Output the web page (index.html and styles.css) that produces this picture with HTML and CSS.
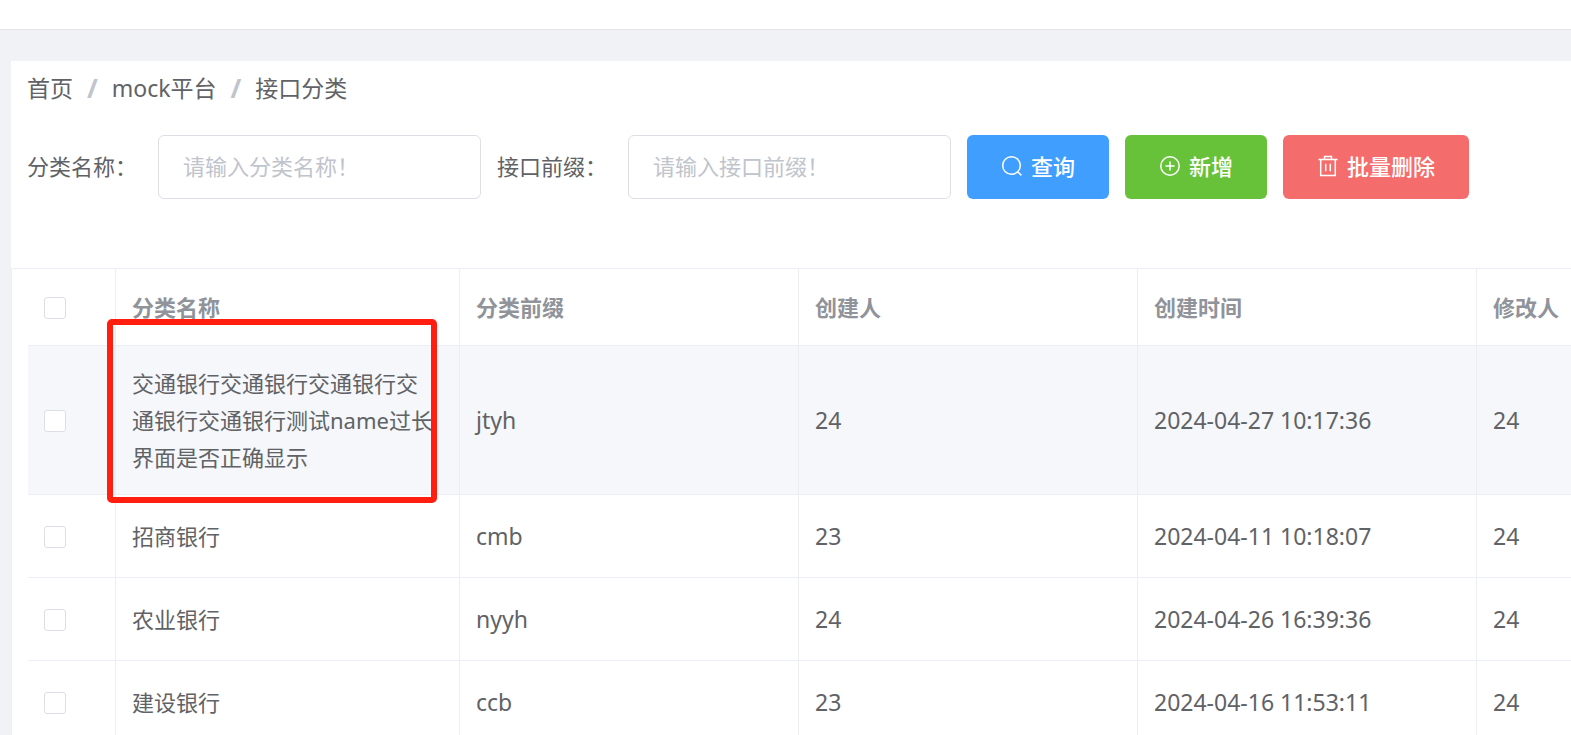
FILE: index.html
```
<!DOCTYPE html>
<html lang="zh-CN">
<head>
  <meta charset="utf-8">
  <meta name="viewport" content="width=device-width, initial-scale=1">
  <title>接口分类</title>
  <link rel="stylesheet" href="styles.css">
</head>
<body>
  <header class="topbar"></header>
  <main class="card">
    <nav class="breadcrumb">
      <a href="#">首页</a>
      <span class="separator">/</span>
      <a href="#">mock平台</a>
      <span class="separator">/</span>
      <a href="#">接口分类</a>
    </nav>

    <form class="filters">
      <div class="field">
        <label for="name">分类名称：</label>
        <input id="name" type="text" placeholder="请输入分类名称！">
      </div>
      <div class="field">
        <label for="prefix">接口前缀：</label>
        <input id="prefix" type="text" placeholder="请输入接口前缀！">
      </div>
      <button type="button" class="btn btn-primary">
        <svg class="icon" viewBox="0 0 22 22" aria-hidden="true"><circle cx="10.5" cy="10.5" r="8.8"/><path d="M17 17l3.4 3.4"/></svg>
        <span>查询</span>
      </button>
      <button type="button" class="btn btn-success">
        <svg class="icon" viewBox="0 0 22 22" aria-hidden="true"><circle cx="11" cy="11" r="9.2"/><path d="M6.500 11h9M11 6.500v9"/></svg>
        <span>新增</span>
      </button>
      <button type="button" class="btn btn-danger">
        <svg class="icon" viewBox="0 0 22 22" aria-hidden="true"><path d="M1.500 4.500h19M7.500 4.500v-3h7v3M3.700 4.500v16h14.600v-16M8.700 8.700v7.600M13.300 8.700v7.600"/></svg>
        <span>批量删除</span>
      </button>
    </form>

    <div class="table-wrap">
      <table class="table">
        <colgroup>
          <col class="col-check">
          <col class="col-name">
          <col class="col-data">
          <col class="col-data">
          <col class="col-data">
          <col>
        </colgroup>
        <thead>
          <tr>
            <th><input type="checkbox" aria-label="全选"></th>
            <th>分类名称</th>
            <th>分类前缀</th>
            <th>创建人</th>
            <th>创建时间</th>
            <th>修改人</th>
          </tr>
        </thead>
        <tbody>
          <tr class="active">
            <td><input type="checkbox" aria-label="选择 jtyh"></td>
            <td class="marked">交通银行交通银行交通银行交通银行交通银行测试name过长界面是否正确显示<span class="marker"></span></td>
            <td class="latin">jtyh</td>
            <td class="latin">24</td>
            <td class="latin">2024-04-27 10:17:36</td>
            <td class="latin">24</td>
          </tr>
          <tr>
            <td><input type="checkbox" aria-label="选择 cmb"></td>
            <td>招商银行</td>
            <td class="latin">cmb</td>
            <td class="latin">23</td>
            <td class="latin">2024-04-11 10:18:07</td>
            <td class="latin">24</td>
          </tr>
          <tr>
            <td><input type="checkbox" aria-label="选择 nyyh"></td>
            <td>农业银行</td>
            <td class="latin">nyyh</td>
            <td class="latin">24</td>
            <td class="latin">2024-04-26 16:39:36</td>
            <td class="latin">24</td>
          </tr>
          <tr>
            <td><input type="checkbox" aria-label="选择 ccb"></td>
            <td>建设银行</td>
            <td class="latin">ccb</td>
            <td class="latin">23</td>
            <td class="latin">2024-04-16 11:53:11</td>
            <td class="latin">24</td>
          </tr>
        </tbody>
      </table>
    </div>
  </main>
</body>
</html>
```
FILE: styles.css
```
* {
  box-sizing: border-box;
}

body {
  margin: 0;
  height: 100vh;
  overflow: hidden;
  display: flex;
  flex-direction: column;
  background: #f0f2f5;
  color: #606266;
  font-family: "Noto Sans", "Noto Sans CJK SC", sans-serif;
  font-size: 22px;
  line-height: 37px;
}

.topbar {
  flex: none;
  height: 30px;
  background: #fff;
  border-bottom: 1px solid #e6e6e6;
}

.card {
  flex: 1;
  min-height: 0;
  margin: 31px 0 0 11px;
  background: #fff;
}

.breadcrumb {
  display: flex;
  gap: 14px;
  padding: 9px 16px 0;
  font-size: 23px;
}

.breadcrumb a {
  color: inherit;
  text-decoration: none;
}

.separator {
  color: #c0c4cc;
  font-size: 26px;
  font-weight: 700;
}

.filters {
  display: flex;
  align-items: center;
  gap: 16px;
  padding: 28px 16px 69px;
}

.field {
  display: flex;
  align-items: center;
}

.field label {
  width: 131px;
  padding-bottom: 2px;
}

.field input {
  width: 323px;
  height: 64px;
  padding: 0 24px 2px;
  border: 1px solid #dcdfe6;
  border-radius: 6px;
  background: #fff;
  color: inherit;
  font: inherit;
}

.field input::placeholder {
  color: #c0c4cc;
  opacity: 1;
}

.btn {
  display: flex;
  align-items: center;
  gap: 8px;
  height: 64px;
  padding: 0 34px 2px;
  border: 0;
  border-radius: 6px;
  color: #fff;
  font: inherit;
  font-weight: 500;
  white-space: nowrap;
}

.btn-primary {
  background: #409eff;
}

.btn-success {
  background: #67c23a;
}

.btn-danger {
  background: #f56c6c;
}

.icon {
  width: 22px;
  height: 22px;
  fill: none;
  stroke: currentColor;
  stroke-width: 1.5;
}

.table-wrap {
  padding-left: 16px;
  border: solid #ebeef5;
  border-width: 1px 0 0 1px;
}

.table {
  width: 100%;
  table-layout: fixed;
  border-collapse: separate;
  border-spacing: 0;
}

.col-check {
  width: 88px;
}

.col-name {
  width: 344px;
}

.col-data {
  width: 339px;
}

.table th,
.table td {
  height: 83px;
  padding: 19px 16px 18px;
  border: solid #ebeef5;
  border-width: 0 1px 1px 0;
  text-align: left;
  vertical-align: middle;
}

.table th {
  height: 77px;
  color: #909399;
  font-weight: 700;
  white-space: nowrap;
}

.table th:last-child,
.table td:last-child {
  border-right: 0;
}

.table .active td {
  background: #f5f7fa;
}

.table .latin {
  font-size: 23px;
}

.table .marked {
  position: relative;
  padding-right: 20px;
}

.marker {
  position: absolute;
  inset: -27px 22px -9px -9px;
  border: 6px solid #ff1e10;
  border-radius: 5px;
}

.table input {
  display: block;
  appearance: none;
  width: 22px;
  height: 22px;
  margin: 0;
  border: 1px solid #dcdfe6;
  border-radius: 3px;
  background: #fff;
}
```
